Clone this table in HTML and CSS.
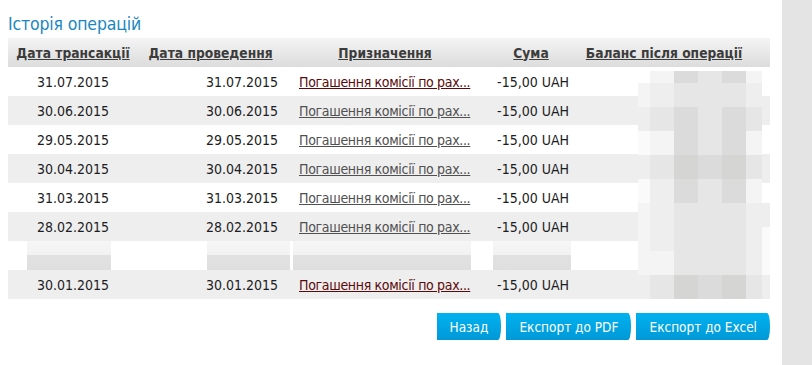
FILE: index.html
```html
<!DOCTYPE html>
<html lang="uk">
<head>
<meta charset="utf-8">
<title>Історія операцій</title>
<link rel="stylesheet" href="styles.css">
</head>
<body>
<div class="page">
  <main class="main">
    <h1 class="title">Історія операцій</h1>
    <div class="table-wrap">
      <table class="ops">
        <colgroup>
          <col class="c1"><col class="c2"><col class="c3"><col class="c4"><col class="c5">
        </colgroup>
        <thead>
          <tr>
            <th><a href="#">Дата трансакції</a></th>
            <th><a href="#">Дата проведення</a></th>
            <th><a href="#">Призначення</a></th>
            <th><a href="#">Сума</a></th>
            <th class="bal-h"><a href="#">Баланс після операції</a></th>
          </tr>
        </thead>
        <tbody>
          <tr><td class="d1">31.07.2015</td><td class="d2">31.07.2015</td><td class="p"><a class="hot" href="#">Погашення комісії по рах...</a></td><td class="s">-15,00 UAH</td><td></td></tr>
          <tr><td class="d1">30.06.2015</td><td class="d2">30.06.2015</td><td class="p"><a href="#">Погашення комісії по рах...</a></td><td class="s">-15,00 UAH</td><td></td></tr>
          <tr><td class="d1">29.05.2015</td><td class="d2">29.05.2015</td><td class="p"><a href="#">Погашення комісії по рах...</a></td><td class="s">-15,00 UAH</td><td></td></tr>
          <tr><td class="d1">30.04.2015</td><td class="d2">30.04.2015</td><td class="p"><a href="#">Погашення комісії по рах...</a></td><td class="s">-15,00 UAH</td><td></td></tr>
          <tr><td class="d1">31.03.2015</td><td class="d2">31.03.2015</td><td class="p"><a href="#">Погашення комісії по рах...</a></td><td class="s">-15,00 UAH</td><td></td></tr>
          <tr><td class="d1">28.02.2015</td><td class="d2">28.02.2015</td><td class="p"><a href="#">Погашення комісії по рах...</a></td><td class="s">-15,00 UAH</td><td></td></tr>
          <tr class="blurred">
            <td><div class="blur b1"></div></td>
            <td><div class="blur b2"></div></td>
            <td><div class="blur b3"></div></td>
            <td><div class="blur b4"></div></td>
            <td></td>
          </tr>
          <tr><td class="d1">30.01.2015</td><td class="d2">30.01.2015</td><td class="p"><a class="hot" href="#">Погашення комісії по рах...</a></td><td class="s">-15,00 UAH</td><td></td></tr>
        </tbody>
      </table>
      <div class="mosaic" aria-hidden="true">
        <i></i><i class="s1"></i><i class="s4"></i><i class="s3"></i><i class="s4"></i><i class="s1"></i><i></i>
        <i class="s1"></i><i class="s2"></i><i class="s3"></i><i class="s3"></i><i class="s3"></i><i class="s2"></i><i></i>
        <i class="s2"></i><i class="s3"></i><i class="s4"></i><i class="s3"></i><i class="s4"></i><i class="s3"></i><i></i>
        <i class="s0"></i><i class="s1"></i><i class="s4"></i><i class="s3"></i><i class="s4"></i><i class="s1"></i><i></i>
        <i class="s2"></i><i class="s3"></i><i class="s5"></i><i class="s4"></i><i class="s5"></i><i class="s3"></i><i></i>
        <i class="s0"></i><i class="s2"></i><i class="s4"></i><i class="s3"></i><i class="s4"></i><i class="s1"></i><i></i>
        <i class="s1"></i><i class="s2"></i><i class="s3"></i><i class="s3"></i><i class="s3"></i><i class="s2"></i><i class="s2"></i>
        <i class="s1"></i><i class="s2"></i><i class="s3"></i><i class="s3"></i><i class="s3"></i><i class="s2"></i><i class="s0"></i>
        <i class="s1"></i><i class="s1"></i><i class="s3"></i><i class="s3"></i><i class="s3"></i><i class="s2"></i><i class="s0"></i>
        <i class="s2"></i><i class="s3"></i><i class="s5"></i><i class="s4"></i><i class="s5"></i><i class="s3"></i><i></i>
      </div>
    </div>
    <div class="actions">
      <button class="btn">Назад</button>
      <button class="btn">Експорт до PDF</button>
      <button class="btn">Експорт до Excel</button>
    </div>
  </main>
  <aside class="side"></aside>
</div>
</body>
</html>
```
FILE: styles.css
```css
html, body {
  margin: 0;
  padding: 0;
  background: #ffffff;
}
body {
  font-family: "DejaVu Sans Condensed", "DejaVu Sans", sans-serif;
  font-size: 14px;
  color: #1c1c24;
}
.page {
  display: flex;
  height: 365px;
  overflow: hidden;
}
.main {
  width: 762px;
  margin-left: 8px;
}
.side {
  margin-left: 12px;
  width: 30px;
  background: #e4e4e4;
  flex: none;
}
.title {
  margin: 13px 0 3px;
  font-size: 17.5px;
  line-height: 22px;
  letter-spacing: -0.15px;
  font-weight: normal;
  color: #1a87c1;
}
.table-wrap {
  position: relative;
}
.ops {
  width: 762px;
  border-collapse: collapse;
  table-layout: fixed;
}
.c1 { width: 130px; }
.c2 { width: 145px; }
.c3 { width: 204px; }
.c4 { width: 88px; }
.c5 { width: 195px; }
.ops th {
  height: 29px;
  padding: 0;
  background: linear-gradient(#f4f4f4, #dcdcdc);
  text-align: center;
  font-size: 13.7px;
  font-weight: bold;
  white-space: nowrap;
}
.ops th a {
  color: #3c3c3c;
  text-decoration: underline;
}
.ops th.bal-h {
  padding-right: 17px;
}
.ops td {
  height: 29px;
  padding: 0;
  vertical-align: middle;
  white-space: nowrap;
}
.ops tbody tr:nth-child(even) td {
  background: #eeeeee;
}
.ops td.d1 { text-align: center; }
.ops td.d2 { text-align: right; padding-right: 5px; }
.ops td.p { padding-left: 16px; }
.ops td.p a {
  color: #505050;
  text-decoration: underline;
  letter-spacing: -0.33px;
}
.ops td.p a.hot { color: #5a0a0a; }
.ops td.s { text-align: right; padding-right: 6px; }

.blur {
  height: 29px;
  background: linear-gradient(#f6f6f6 0, #f2f2f2 48%, #e1e1e1 48%, #dfdfdf 100%);
}
.b1 { margin-left: 19px; width: 84px; }
.b2 { margin-left: 69px; width: 83px; }
.b3 { margin-left: 10px; width: 178px; }
.b4 { margin-left: 6px; width: 78px; }

.mosaic {
  position: absolute;
  left: 630px;
  top: 33px;
  width: 132px;
  display: grid;
  grid-template-columns: 12px 24px 24px 24px 24px 16px 8px;
  grid-template-rows: 12px repeat(9, 24px);
}
.mosaic i { display: block; }
.mosaic .s0 { background: #fafafa; }
.mosaic .s1 { background: #f4f4f4; }
.mosaic .s2 { background: #eeeeee; }
.mosaic .s3 { background: #e6e6e6; }
.mosaic .s4 { background: #dcdbdb; }
.mosaic .s5 { background: #d5d5d4; }

.actions {
  display: flex;
  justify-content: flex-end;
  gap: 5px;
  margin-top: 14px;
}
.btn {
  height: 27px;
  padding: 0 13px;
  border: 0;
  border-radius: 0 3px 3px 0 / 0 13px 13px 0;
  background: linear-gradient(#00b2f0, #0098d7);
  color: #ffffff;
  font-family: "DejaVu Sans Condensed", "DejaVu Sans", sans-serif;
  font-size: 13.5px;
  cursor: pointer;
}
```
